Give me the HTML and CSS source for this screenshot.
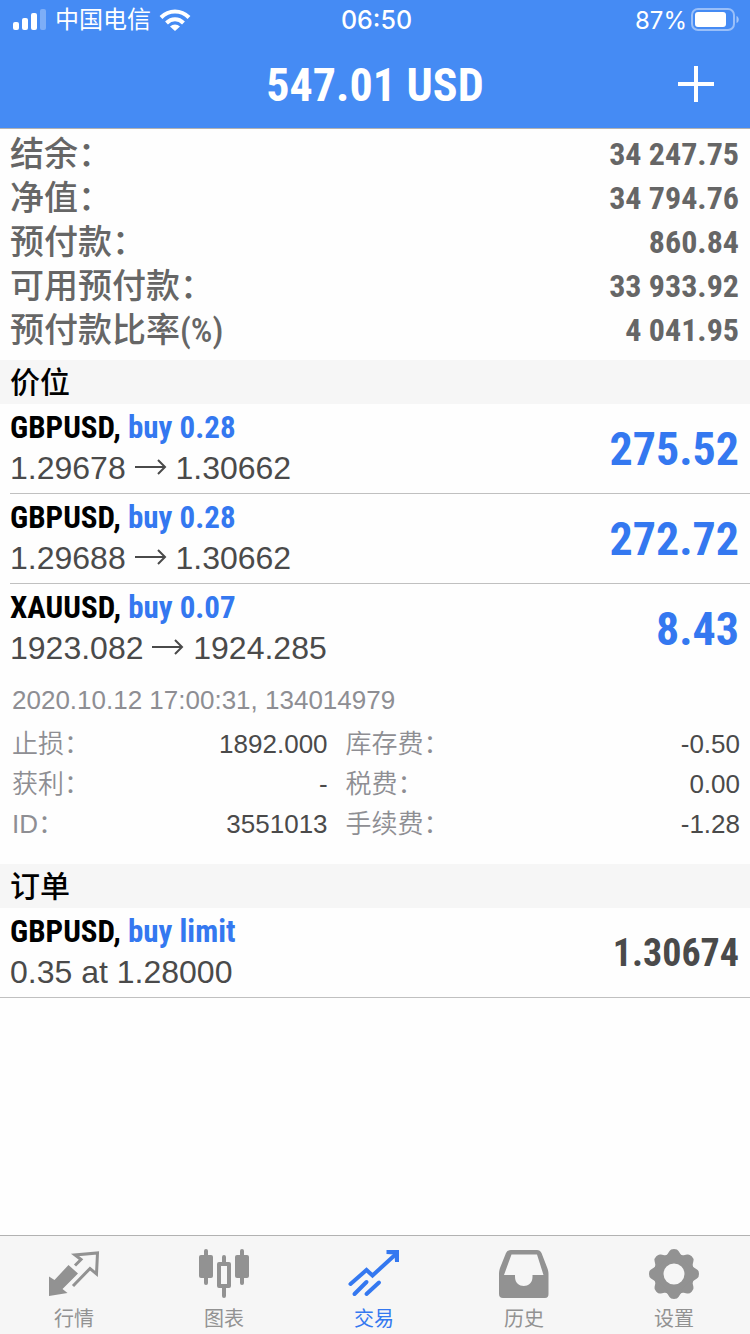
FILE: index.html
```html
<!DOCTYPE html>
<html lang="zh-CN">

<head>
    <meta charset="utf-8">
    <meta name="viewport" content="width=device-width, initial-scale=1">
    <title>交易</title>
    <link rel="stylesheet" href="styles.css">
</head>

<body>

    <header class="top">
        <div class="status-bar">
            <div class="status-left">
                <svg class="signal" width="34" height="22" viewBox="0 0 34 22" fill="#fff" aria-hidden="true">
                    <rect x="0" y="13" width="6" height="8" rx="2" />
                    <rect x="9" y="9" width="6" height="12" rx="2" />
                    <rect x="18" y="4" width="6" height="17" rx="2" />
                    <rect x="27" y="0" width="6" height="21" rx="2" opacity="0.3" />
                </svg>
                <span class="carrier">中国电信</span>
                <svg width="32" height="22" viewBox="0 0 32 22" aria-hidden="true">
                    <g fill="none" stroke="#fff" stroke-width="4">
                        <path d="M2 8.5C10 0.5 22 0.5 30 8.5" />
                        <path d="M7.5 14C12.500 9 19.500 9 24.500 14" />
                    </g>
                    <path d="M11 17.500C14 14.700 18 14.700 21 17.500L16 22Z" fill="#fff" />
                </svg>
            </div>
            <span class="clock">06:50</span>
            <div class="status-right">
                <span>87%</span>
                <svg width="49" height="24" viewBox="0 0 49 24" aria-hidden="true">
                    <rect x="1" y="1" width="42" height="21" rx="6" fill="none" stroke="#fff" stroke-width="2" opacity="0.45" />
                    <rect x="4" y="4" width="31" height="15" rx="3" fill="#fff" />
                    <path d="M45.500 8C48.500 9 48.500 14 45.500 15Z" fill="#fff" opacity="0.5" />
                </svg>
            </div>
        </div>
        <div class="nav-bar">
            <h1>547.01 USD</h1>
            <button class="add" type="button" aria-label="新订单">
                <svg width="36" height="36" viewBox="0 0 36 36" stroke="#fff" stroke-width="4">
                    <path d="M18 0V36M0 18H36" />
                </svg>
            </button>
        </div>
    </header>

    <main>
        <dl class="summary">
            <div><dt>结余&#xFF1A;</dt><dd>34 247.75</dd></div>
            <div><dt>净值&#xFF1A;</dt><dd>34 794.76</dd></div>
            <div><dt>预付款&#xFF1A;</dt><dd>860.84</dd></div>
            <div><dt>可用预付款&#xFF1A;</dt><dd>33 933.92</dd></div>
            <div><dt>预付款比率(%)</dt><dd>4 041.95</dd></div>
        </dl>

        <h2>价位</h2>
        <ul class="positions">
            <li>
                <div class="deal">
                    <div>
                        <div class="symbol">GBPUSD, <span>buy 0.28</span></div>
                        <div class="prices">1.29678 <svg class="arrow" viewBox="0 0 32 16"><path d="M0 8H30M23 1L30 8L23 15" /></svg> 1.30662</div>
                    </div>
                    <strong class="profit">275.52</strong>
                </div>
            </li>
            <li>
                <div class="deal">
                    <div>
                        <div class="symbol">GBPUSD, <span>buy 0.28</span></div>
                        <div class="prices">1.29688 <svg class="arrow" viewBox="0 0 32 16"><path d="M0 8H30M23 1L30 8L23 15" /></svg> 1.30662</div>
                    </div>
                    <strong class="profit">272.72</strong>
                </div>
            </li>
            <li>
                <div class="deal">
                    <div>
                        <div class="symbol">XAUUSD, <span>buy 0.07</span></div>
                        <div class="prices">1923.082 <svg class="arrow" viewBox="0 0 32 16"><path d="M0 8H30M23 1L30 8L23 15" /></svg> 1924.285</div>
                    </div>
                    <strong class="profit">8.43</strong>
                </div>
                <div class="details">
                    <p>2020.10.12 17:00:31, 134014979</p>
                    <div class="detail-columns">
                        <dl class="levels">
                            <div><dt>止损&#xFF1A;</dt><dd>1892.000</dd></div>
                            <div><dt>获利&#xFF1A;</dt><dd>-</dd></div>
                            <div><dt>ID&#xFF1A;</dt><dd>3551013</dd></div>
                        </dl>
                        <dl class="fees">
                            <div><dt>库存费&#xFF1A;</dt><dd>-0.50</dd></div>
                            <div><dt>税费&#xFF1A;</dt><dd>0.00</dd></div>
                            <div><dt>手续费&#xFF1A;</dt><dd>-1.28</dd></div>
                        </dl>
                    </div>
                </div>
            </li>
        </ul>

        <h2>订单</h2>
        <ul class="orders">
            <li>
                <div class="deal">
                    <div>
                        <div class="symbol">GBPUSD, <span>buy limit</span></div>
                        <div class="prices">0.35 at 1.28000</div>
                    </div>
                    <strong class="price">1.30674</strong>
                </div>
            </li>
        </ul>
    </main>

    <nav class="tabs">
        <a href="#quotes">
            <svg width="52" height="52" viewBox="0 0 52 52">
                <path d="M1 28.500L6.500 32L20.500 17L30 25.500L14.500 41L19.500 45L1 48Z" fill="currentColor" />
                <path d="M27 17.500L33 11.500L27 7L49.500 5L48.500 26L42 20.500L25 38" fill="none" stroke="currentColor" stroke-width="3" />
            </svg>
            行情
        </a>
        <a href="#chart">
            <svg width="52" height="52" viewBox="0 0 52 52" fill="currentColor">
                <rect x="1" y="7" width="14" height="23" rx="2" />
                <rect x="6" y="1" width="4" height="36" rx="2" />
                <rect x="37" y="7" width="14" height="23" rx="2" />
                <rect x="42" y="1" width="4" height="36" rx="2" />
                <rect x="21" y="16" width="10" height="22" fill="none" stroke="currentColor" stroke-width="4" stroke-linejoin="round" />
                <path d="M26 9V15M26 39V48" stroke="currentColor" stroke-width="4" stroke-linecap="round" />
            </svg>
            图表
        </a>
        <a class="active" href="#trade" aria-current="page">
            <svg width="52" height="52" viewBox="0 0 52 52" fill="none" stroke="currentColor" stroke-width="4" stroke-linecap="round">
                <path d="M2.500 36L18.500 22L24.500 27.500L48 6" />
                <path d="M6.500 46L18.500 34M18.500 46L31 34.500" />
                <path d="M38.500 2H51V14H47L46.500 6.500L38.500 6Z" fill="currentColor" stroke="none" />
            </svg>
            交易
        </a>
        <a href="#history">
            <svg width="52" height="52" viewBox="0 0 52 52">
                <path fill="currentColor" fill-rule="evenodd" d="M13 2H39Q42 2 43.500 5L49.300 20Q50.500 23 50.500 26V46Q50.500 50 47 50H5Q1 50 1 46V26Q1 23 2 20L8 5Q9 2 13 2ZM13.500 6.500L6 27H17V29C17 41 34.500 41 34.500 29V27H45.500L39 6.500Z" />
            </svg>
            历史
        </a>
        <a href="#settings">
            <svg width="52" height="52" viewBox="0 0 52 52" fill="currentColor">
                <defs>
                    <path id="tooth" d="M17 10L21.500 3Q22.500 1 26 1T30.500 3L35 10Z" />
                </defs>
                <circle cx="26" cy="26" r="15.500" fill="none" stroke="currentColor" stroke-width="10" />
                <use href="#tooth" />
                <use href="#tooth" transform="rotate(45 26 26)" />
                <use href="#tooth" transform="rotate(90 26 26)" />
                <use href="#tooth" transform="rotate(135 26 26)" />
                <use href="#tooth" transform="rotate(180 26 26)" />
                <use href="#tooth" transform="rotate(225 26 26)" />
                <use href="#tooth" transform="rotate(270 26 26)" />
                <use href="#tooth" transform="rotate(315 26 26)" />
            </svg>
            设置
        </a>
    </nav>

</body>

</html>
```
FILE: styles.css
```css
* {
    box-sizing: border-box;
}

body {
    display: flex;
    flex-direction: column;
    min-height: 100vh;
    margin: 0;
    font-family: "Liberation Sans", "Noto Sans CJK SC", sans-serif;
    font-size: 26px;
    color: #4a4a4a;
    background-color: #fefefe;
}

h1, h2, p, dl, dd, ul {
    margin: 0;
    padding: 0;
}

ul {
    list-style: none;
}

main {
    flex: 1;
}

/* header */

.top {
    color: #fff;
    background-color: #458bf4;
    border-bottom: 1px solid #b2b2b2;
}

.status-bar {
    display: grid;
    grid-template-columns: 1fr auto 1fr;
    align-items: center;
    height: 40px;
    padding: 0 10px 0 13px;
    font-family: Inter, "Noto Sans CJK SC", sans-serif;
    font-size: 24px;
}

.status-left, .status-right {
    display: flex;
    align-items: center;
    gap: 8px;
}

.status-left {
    line-height: 32px;
}

.status-right {
    justify-content: flex-end;
    gap: 4px;
}

.clock {
    font-size: 25px;
    font-weight: 500;
}

.nav-bar {
    display: grid;
    grid-template-columns: 1fr auto 1fr;
    align-items: center;
    height: 88px;
    padding: 0 36px;
}

h1, .summary, .symbol, .profit, .price {
    font-family: "Roboto Condensed", "Liberation Sans Narrow", "Noto Sans CJK SC", sans-serif;
    font-weight: bold;
}

h1 {
    grid-column: 2;
    padding-top: 2px;
    font-size: 46px;
    line-height: 60px;
}

.add {
    justify-self: end;
    display: flex;
    padding: 0;
    border: 0;
    background: none;
    cursor: pointer;
}

/* account summary */

.summary {
    padding: 3px 11px 8px 10px;
    line-height: 44px;
    color: #666;
}

.summary div {
    display: flex;
    justify-content: space-between;
    height: 44px;
}

.summary dt {
    font-size: 34px;
    font-weight: 500;
}

.summary dd {
    font-size: 32px;
}

h2 {
    height: 44px;
    padding: 0 10px;
    font-size: 30px;
    font-weight: 500;
    line-height: 46px;
    color: #000;
    background-color: #f6f6f6;
}

/* positions and orders */

.positions li + li {
    margin-left: 10px;
    border-top: 1px solid #c0c0c0;
}

.positions li + li .deal {
    padding-left: 0;
}

.orders li {
    border-bottom: 1px solid #c0c0c0;
}

.deal {
    display: flex;
    justify-content: space-between;
    align-items: center;
    padding: 4px 11px 4px 10px;
}

.symbol {
    font-size: 31px;
    line-height: 40px;
    color: #000;
}

.symbol span, .profit {
    color: #3478f0;
}

.prices {
    font-size: 32px;
    line-height: 41px;
}

.arrow {
    width: 32px;
    height: 16px;
    fill: none;
    stroke: #4a4a4a;
    stroke-width: 2;
    vertical-align: 4px;
}

.profit {
    font-size: 46px;
}

.price {
    font-size: 38px;
}

.details {
    padding: 7px 10px 20px 2px;
    line-height: 40px;
}

.details p {
    height: 44px;
    color: #8e8e93;
}

.detail-columns {
    display: flex;
    gap: 18px;
}

.levels {
    flex: 4;
}

.fees {
    flex: 5;
}

.detail-columns dl div {
    display: flex;
    justify-content: space-between;
    height: 40px;
}

.detail-columns dt {
    color: #8e8e93;
    font-weight: 350;
}

/* bottom tabs */

.tabs {
    position: sticky;
    bottom: 0;
    display: flex;
    border-top: 1px solid #b2b2b2;
    background-color: #f6f6f6;
}

.tabs a {
    flex: 1;
    display: flex;
    flex-direction: column;
    align-items: center;
    gap: 4px;
    padding: 12px 2px 0 0;
    font-size: 20px;
    line-height: 30px;
    color: #929292;
    text-decoration: none;
}

.tabs .active {
    color: #3478f0;
}
```
